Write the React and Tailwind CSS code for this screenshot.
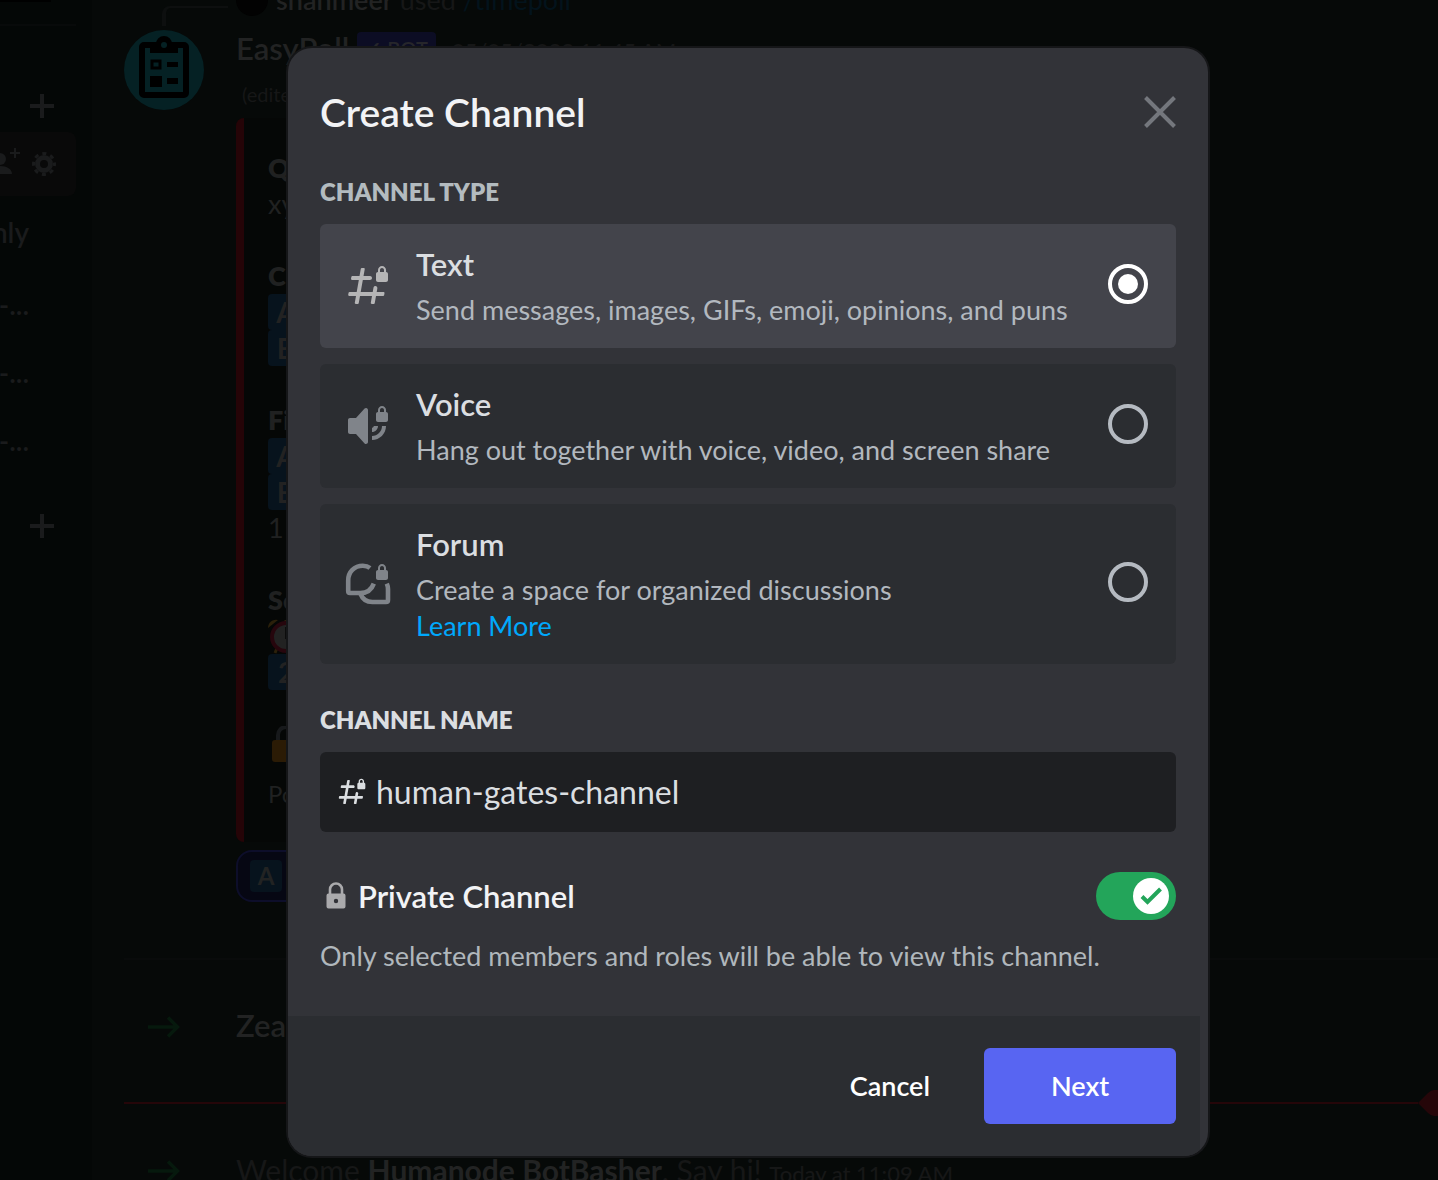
import { useState } from "react";

const LOCK_PATH =
  "M21.025 5V4C21.025 2.88 20.05 2 19 2C17.95 2 17 2.88 17 4V5C16.4477 5 16 5.44772 16 6V9C16 9.55228 16.4477 10 17 10H21C21.5523 10 22 9.55228 22 9V6C22 5.45 21.5635 5 21.025 5ZM20 5H18V4C18 3.42857 18.4667 3 19 3C19.5333 3 20 3.42857 20 4V5Z";

function HashLockIcon({ className }) {
  return (
    <svg viewBox="0 0 24 24" fill="currentColor" className={className} aria-hidden="true">
      <path d="M14 8C14 7.44772 13.5523 7 13 7H9.76001L10.3657 3.58738C10.4201 3.28107 10.1845 3 9.87344 3H8.88907C8.64664 3 8.43914 3.17391 8.39677 3.41262L7.76001 7H4.18011C3.93722 7 3.72946 7.17456 3.68759 7.41381L3.51259 8.41381C3.45905 8.71977 3.69449 9 4.00511 9H7.41001L6.35001 15H2.77011C2.52722 15 2.31946 15.1746 2.27759 15.4138L2.10259 16.4138C2.04905 16.7198 2.28449 17 2.59511 17H6.00001L5.39427 20.4126C5.3399 20.7189 5.57547 21 5.88657 21H6.87094C7.11337 21 7.32088 20.8261 7.36325 20.5874L8.00001 17H14L13.3943 20.4126C13.3399 20.7189 13.5755 21 13.8866 21H14.8709C15.1134 21 15.3209 20.8261 15.3632 20.5874L16 17H19.5799C19.8228 17 20.0306 16.8254 20.0724 16.5862L20.2474 15.5862C20.301 15.2802 20.0655 15 19.7549 15H16.35L16.6758 13.1558C16.7823 12.5529 16.3186 12 15.7063 12C15.2286 12 14.8199 12.3429 14.7368 12.8133L14.3504 15H8.35045L9.41045 9H13C13.5523 9 14 8.55228 14 8Z" />
      <path fillRule="evenodd" d={LOCK_PATH} />
    </svg>
  );
}

function VoiceLockIcon({ className }) {
  return (
    <svg viewBox="0 0 24 24" fill="currentColor" className={className} aria-hidden="true">
      <path d="M11.383 3.07904C11.009 2.92504 10.579 3.01004 10.293 3.29604L6 8.00204H3C2.45 8.00204 2 8.45304 2 9.00204V15.002C2 15.552 2.45 16.002 3 16.002H6L10.293 20.71C10.579 20.996 11.009 21.082 11.383 20.927C11.757 20.772 12 20.407 12 20.002V4.00204C12 3.59904 11.757 3.23204 11.383 3.07904Z" />
      <path d="M14 15C15.66 15 17 13.66 17 12H14.9C14.8 12.5 14.5 12.8 14 12.95V15Z" />
      <path d="M14 19C17.87 19 21 15.87 21 12H19C19 14.76 16.76 17 14 17V19Z" />
      <path fillRule="evenodd" d={LOCK_PATH} />
    </svg>
  );
}

function ForumLockIcon({ className }) {
  return (
    <svg viewBox="0 0 24 24" fill="none" className={className} aria-hidden="true">
      <g stroke="currentColor" strokeWidth="2.3" strokeLinejoin="round">
        <path d="M13 4C12 3.2 10.800 2.900 9.400 2.900C5.200 2.900 2.100 6 2.100 10.200V15.500C2.100 16.200 2.400 16.500 3 16.500H8.200C11.400 16.500 13.800 14.800 14.900 11.800" />
        <path d="M8.200 16.800C9.200 19.400 11.400 21 14.200 21H21C21.700 21 22 20.700 22 20V14.500C22 13.600 21.800 12.700 21.400 11.800" />
      </g>
      <path fill="currentColor" fillRule="evenodd" d={LOCK_PATH} />
    </svg>
  );
}

function LockIcon({ className }) {
  return (
    <svg viewBox="0 0 32 32" className={className} aria-hidden="true">
      <path d="M10 14V9.500a6 6 0 0 1 12 0V14" fill="none" stroke="currentColor" strokeWidth="2.6" />
      <path
        fill="currentColor"
        fillRule="evenodd"
        d="M8.500 13.500h15a2 2 0 0 1 2 2v11a2 2 0 0 1-2 2h-15a2 2 0 0 1-2-2v-11a2 2 0 0 1 2-2Zm7.500 5.300a2.200 2.200 0 1 0 0 4.400a2.200 2.200 0 0 0 0-4.400Z"
      />
    </svg>
  );
}

function PlusIcon() {
  return (
    <svg viewBox="0 0 24 24" className="size-6 shrink-0" aria-hidden="true">
      <path d="M12 0V24M0 12H24" stroke="currentColor" strokeWidth="4" />
    </svg>
  );
}

function JoinArrow() {
  return (
    <svg viewBox="0 0 32 24" className="h-6 w-8 shrink-0 text-[#06190d]" aria-hidden="true">
      <path d="M0 12H29M20 2.500L29.500 12L20 21.500" fill="none" stroke="currentColor" strokeWidth="3.500" />
    </svg>
  );
}

function PollAvatar() {
  return (
    <svg viewBox="0 0 80 80" className="size-20 shrink-0" aria-hidden="true">
      <circle cx="40" cy="40" r="40" fill="#052124" />
      <rect x="18" y="15" width="44" height="50" rx="2" fill="none" stroke="#000" strokeWidth="6" />
      <path d="M26 23V14h6a8 8 0 0 1 16 0h6v9Z" fill="#000" />
      <circle cx="40" cy="15" r="3" fill="#052124" />
      <rect x="28" y="31" width="8" height="7" fill="none" stroke="#000" strokeWidth="3" />
      <path d="M43 32h11v5H43ZM26 46h12v11H26ZM43 48h11v6H43Z" fill="#000" />
    </svg>
  );
}

function GearIcon() {
  return (
    <svg viewBox="0 0 24 24" className="size-6 shrink-0" aria-hidden="true">
      <circle cx="12" cy="12" r="6.500" fill="none" stroke="currentColor" strokeWidth="5" />
      <circle cx="12" cy="12" r="10.500" fill="none" stroke="currentColor" strokeWidth="3" strokeDasharray="4.120 4.127" strokeDashoffset="2.060" />
    </svg>
  );
}

function AddMemberIcon() {
  return (
    <svg viewBox="0 0 32 32" className="size-8 shrink-0" fill="currentColor" aria-hidden="true">
      <circle cx="12" cy="11" r="6" />
      <path d="M0 26c0-5 5-8 12-8s12 3 12 8ZM26 0h2v4h4v2h-4v4h-2V6h-4V4h4Z" />
    </svg>
  );
}

function AlarmClock() {
  return (
    <svg viewBox="0 0 36 36" className="size-9" aria-hidden="true">
      <path d="M0 10a8 8 0 0 1 10-8ZM36 10a8 8 0 0 0-10-8Z" fill="#2b200a" />
      <path d="M9 30l-2 5M27 30l2 5M18 2v4" stroke="#2b200a" strokeWidth="3" />
      <circle cx="18" cy="19" r="14" fill="#222" stroke="#26060d" strokeWidth="4" />
      <path d="M18 9v11h6" fill="none" stroke="#0c0c0c" strokeWidth="2" />
    </svg>
  );
}

function LetterTile({ children }) {
  return (
    <span className="flex size-9 items-center justify-center rounded bg-[#07131d] text-[28px] font-bold leading-9 text-[#222222]">
      {children}
    </span>
  );
}

function Sidebar() {
  return (
    <aside className="flex w-[92px] shrink-0 flex-col overflow-hidden bg-[#040706] pr-4 text-[28px] text-[#1a1b1c]">
      <div className="h-[26px] border-b-2 border-[#080a0a]">
        <div className="h-0.5 w-[51px] bg-black" />
      </div>
      <div className="flex h-[106px] items-end justify-end pb-3.5 pr-[22px]">
        <PlusIcon />
      </div>
      <div className="flex h-16 items-center justify-end gap-3 rounded-r-lg bg-[#090909] pr-5">
        <AddMemberIcon />
        <GearIcon />
      </div>
      <div className="mt-1 flex flex-col gap-1 pr-[47px] leading-[64px]">
        <span className="flex h-16 justify-end font-semibold">only</span>
        <span className="flex h-16 justify-end pt-1 font-semibold">-...</span>
        <span className="flex h-16 justify-end pt-1 font-semibold">-...</span>
        <span className="flex h-16 justify-end pt-1 font-semibold">-...</span>
      </div>
      <div className="flex h-[116px] items-center justify-end pr-[22px]">
        <PlusIcon />
      </div>
    </aside>
  );
}

function PollEmbed() {
  return (
    <div className="h-[724px] w-[600px] overflow-hidden rounded-lg border-l-8 border-[#250407] bg-[#050706] px-6 py-8 text-[27px] leading-9 text-[#202121]">
      <p className="font-extrabold">Question</p>
      <p className="mb-9">xyz</p>
      <p className="font-extrabold">Choices</p>
      <LetterTile>A</LetterTile>
      <LetterTile>B</LetterTile>
      <p className="mt-9 font-extrabold">Final Result</p>
      <LetterTile>A</LetterTile>
      <LetterTile>B</LetterTile>
      <p className="mb-9">1 user voted</p>
      <p className="font-extrabold">Settings</p>
      <AlarmClock />
      <LetterTile>2</LetterTile>
      <svg viewBox="0 0 36 36" className="mt-9 size-9" aria-hidden="true">
        <path d="M10 16V9a8 8 0 0 1 16 0v7" fill="none" stroke="#17191b" strokeWidth="4" />
        <rect x="4" y="14" width="28" height="22" rx="3" fill="#2b1b05" />
      </svg>
      <p className="mt-3.5 text-2xl leading-9">Poll ID</p>
    </div>
  );
}

function Chat() {
  return (
    <main className="min-w-0 flex-1 overflow-hidden bg-[#060908] pl-8 text-[31px] text-[#222323]">
      <div className="-mt-4 flex h-8 items-center gap-2 pl-[38px] text-[27px]">
        <div className="mt-8 h-5 w-[66px] rounded-tl-lg border-l-4 border-t-2 border-[#0d0f0f]" />
        <div className="size-8 rounded-full bg-[#020202]" />
        <p className="whitespace-nowrap">
          <span className="font-semibold">shahmeer</span> <span className="text-[#161717]">used</span>{" "}
          <a href="#timepoll" className="text-[#03131c]">/timepoll</a>
        </p>
      </div>
      <article className="flex gap-8 pt-3.5">
        <PollAvatar />
        <div className="min-w-0">
          <div className="flex h-9 items-center gap-2 whitespace-nowrap">
            <span className="font-semibold">EasyPoll</span>
            <span className="flex h-8 items-center rounded bg-[#0c0d24] px-2 text-xl font-semibold text-[#26262b]">✓ BOT</span>
            <time className="pl-2 pt-1 text-[22px] font-medium text-[#161717]">05/05/2023 11:45 AM</time>
          </div>
          <p className="h-[52px] pl-1.5 pt-3 text-xl leading-8 text-[#161717]">(edited)</p>
          <PollEmbed />
          <button type="button" className="mt-2 flex h-[52px] items-center gap-3 rounded-2xl border-2 border-[#0d0e2a] bg-[#060713] px-3 text-2xl">
            <span className="flex size-8 items-center justify-center rounded bg-[#07131d] font-bold">A</span>
            1
          </button>
        </div>
      </article>
      <hr className="mt-14 border-t-2 border-[#090b0b]" />
      <div className="flex h-[142px] items-center gap-14 pb-2 pl-6">
        <JoinArrow />
        <span className="pb-1 font-semibold">Zealous</span>
      </div>
      <div className="flex items-center">
        <div className="h-0.5 flex-1 bg-[#250609]" />
        <svg viewBox="0 0 20 26" className="-my-3 h-[26px] w-5" aria-hidden="true">
          <path d="M0 13L10 3Q13 0 16 0H20V26H16Q13 26 10 23Z" fill="#250609" />
        </svg>
      </div>
      <div className="flex items-center gap-14 whitespace-nowrap pl-6 pt-11 text-[30px]">
        <JoinArrow />
        <p className="text-[#161717]">
          Welcome <span className="font-bold text-[#222323]">Humanode BotBasher</span>. Say hi!{" "}
          <time className="text-[22px] font-medium">Today at 11:09 AM</time>
        </p>
      </div>
    </main>
  );
}

const channelTypes = [
  { id: "text", title: "Text", description: "Send messages, images, GIFs, emoji, opinions, and puns", icon: HashLockIcon },
  { id: "voice", title: "Voice", description: "Hang out together with voice, video, and screen share", icon: VoiceLockIcon },
  { id: "forum", title: "Forum", description: "Create a space for organized discussions", icon: ForumLockIcon, link: "Learn More" },
];

function ChannelTypeOption({ type, selected, onSelect }) {
  const Icon = type.icon;
  return (
    <div
      className={
        selected
          ? "flex items-center gap-6 rounded-md bg-[#43444b] py-5 pl-6 pr-7 text-[#b5b5b6]"
          : "flex items-center gap-6 rounded-md bg-[#2b2d31] py-5 pl-6 pr-7 text-[#80848a]"
      }
    >
      <Icon className="size-12 shrink-0" />
      <div className="min-w-0 flex-1 text-[27px] leading-9 text-[#b2b8bf]">
        <label htmlFor={type.id} className="block">
          <span className="mb-2 block text-[31px] font-semibold leading-10 text-[#dbdee1]">{type.title}</span>
          {type.description}
        </label>
        {type.link && (
          <a href="#learn-more" className="text-[#00a8fc]">{type.link}</a>
        )}
      </div>
      <input
        id={type.id}
        type="radio"
        name="channel-type"
        checked={selected}
        onChange={onSelect}
        className="mb-1 size-10 shrink-0 appearance-none rounded-full border-4 border-[#b5bac1] bg-clip-content p-1.5 checked:border-white checked:bg-white"
      />
    </div>
  );
}

function CreateChannelModal() {
  const [type, setType] = useState("text");
  const [name, setName] = useState("human-gates-channel");
  const [isPrivate, setIsPrivate] = useState(true);

  return (
    <div
      role="dialog"
      aria-labelledby="modal-title"
      className="w-full max-w-[920px] overflow-hidden rounded-3xl bg-[#323338] shadow-[0_0_0_2px_#151618]"
    >
      <div className="px-8 pb-10 pt-10">
        <div className="flex h-12 items-center justify-between">
          <h1 id="modal-title" className="text-[39px] font-semibold leading-[48px] text-[#f2f3f5]">Create Channel</h1>
          <button type="button" aria-label="Close" className="text-[#74777d]">
            <svg viewBox="0 0 32 32" className="size-8" aria-hidden="true">
              <path d="M1.500 1.500L30.500 30.500M30.500 1.500L1.500 30.500" stroke="currentColor" strokeWidth="4" />
            </svg>
          </button>
        </div>

        <fieldset className="mt-10">
          <legend className="mb-4 text-2xl font-extrabold leading-8 text-[#b3bbbf]">CHANNEL TYPE</legend>
          <div className="flex flex-col gap-4">
            {channelTypes.map((t) => (
              <ChannelTypeOption key={t.id} type={t} selected={type === t.id} onSelect={() => setType(t.id)} />
            ))}
          </div>
        </fieldset>

        <label htmlFor="channel-name" className="mb-4 mt-10 block text-2xl font-extrabold leading-8 text-[#dbdee1]">
          CHANNEL NAME
        </label>
        <div className="flex h-20 items-center gap-2 rounded-md bg-[#1e1f22] px-4 text-[#dbdee1]">
          <HashLockIcon className="size-8 shrink-0" />
          <input
            id="channel-name"
            type="text"
            value={name}
            onChange={(e) => setName(e.target.value)}
            className="min-w-0 flex-1 bg-transparent text-[32px] leading-10 outline-none"
          />
        </div>

        <div className="mt-10 flex h-12 items-center">
          <LockIcon className="mr-1.5 size-8 text-[#aaaaac]" />
          <label htmlFor="private-channel" className="flex-1 text-[31px] font-semibold leading-10 text-[#f2f3f5]">
            Private Channel
          </label>
          <div className="relative h-12 w-20">
            <input
              id="private-channel"
              type="checkbox"
              role="switch"
              checked={isPrivate}
              onChange={(e) => setIsPrivate(e.target.checked)}
              className="block h-12 w-20 appearance-none rounded-full bg-[#80848e] checked:bg-[#23a55a]"
            />
            <svg
              viewBox="0 0 36 36"
              className={isPrivate ? "pointer-events-none absolute right-[7px] top-1.5 size-9" : "pointer-events-none absolute left-[7px] top-1.5 size-9"}
              aria-hidden="true"
            >
              <circle cx="18" cy="18" r="18" fill="white" />
              <path d="M9 18.500L14.500 24L27.500 11" fill="none" stroke={isPrivate ? "#23a55a" : "#80848e"} strokeWidth="4" />
            </svg>
          </div>
        </div>
        <p className="mt-4 text-[27px] leading-10 text-[#b0b7bc]">
          Only selected members and roles will be able to view this channel.
        </p>
      </div>

      <div className="mr-2 flex items-center justify-end gap-1.5 bg-[#2b2d31] py-8 pr-6 text-[27px] font-semibold text-white">
        <button type="button" className="h-[76px] px-12">Cancel</button>
        <button type="button" className="h-[76px] w-48 rounded-md bg-[#5865f2]">Next</button>
      </div>
    </div>
  );
}

export default function App() {
  return (
    <div className="relative h-screen overflow-hidden bg-[#060908] font-['Lato','Open_Sans',sans-serif]">
      <div className="flex h-full">
        <Sidebar />
        <Chat />
      </div>
      <div className="absolute inset-0 flex items-start justify-center pl-[58px] pt-12">
        <CreateChannelModal />
      </div>
    </div>
  );
}
